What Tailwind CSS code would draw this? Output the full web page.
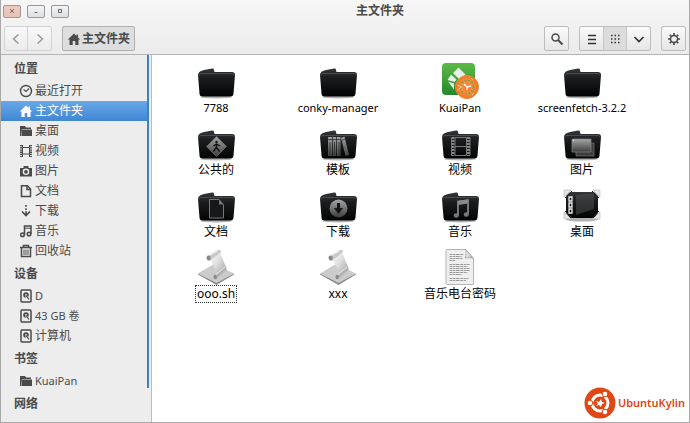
<!DOCTYPE html>
<html lang="zh-CN">
  <head>
    <meta charset="UTF-8" />
    <meta name="viewport" content="width=device-width, initial-scale=1.0" />
    <title>主文件夹</title>
    <script src="https://cdn.jsdelivr.net/npm/@tailwindcss/browser@4"></script>
  </head>
  <body class="bg-white font-['Noto_Sans','Noto_Sans_CJK_SC',sans-serif] text-xs text-[#4a4a4a]">
    <!-- Shared shapes -->
    <svg class="absolute size-0" aria-hidden="true">
      <defs>
        <linearGradient id="black" x1="0" y1="0" x2="0" y2="1">
          <stop offset="0" stop-color="#35383b" />
          <stop offset=".35" stop-color="#1a1c1e" />
          <stop offset="1" stop-color="#020303" />
        </linearGradient>
        <linearGradient id="silver" x1="0" y1="0" x2="0" y2="1">
          <stop offset="0" stop-color="#a5a5a5" />
          <stop offset="1" stop-color="#3e3e3e" />
        </linearGradient>
        <linearGradient id="paper" x1="0" y1="0" x2="1" y2="1">
          <stop offset="0" stop-color="#ffffff" />
          <stop offset=".5" stop-color="#dcdcdc" />
          <stop offset="1" stop-color="#a4a4a4" />
        </linearGradient>
        <linearGradient id="green" x1="0" y1="0" x2="0" y2="1">
          <stop offset="0" stop-color="#5cba45" />
          <stop offset="1" stop-color="#23892c" />
        </linearGradient>
        <radialGradient id="orange">
          <stop offset="0" stop-color="#ffb066" />
          <stop offset="1" stop-color="#f3741c" />
        </radialGradient>
        <symbol id="folder" viewBox="0 0 38 36">
          <ellipse cx="19" cy="34" rx="16" ry="1.5" fill="#000" opacity=".3" />
          <path d="M1 12c0-2 1-3 3-4l3-1 8-1.500c1.500-.2 2 .5 2 1.500l.5 2H35c2 0 3 1 3 3l-1.500 18.500c-.2 2-1 3-3 3h-28c-2 0-3-1-3-3z" fill="url(#black)" />
          <path d="M2 12.500c0-1.500 1-2 2-2h31c1 0 1.700.5 1.800 1.500" fill="none" stroke="#5a5d60" stroke-width=".7" />
        </symbol>
        <symbol id="script" viewBox="0 0 38 36">
          <path d="M1 24.500L17 15l20 9.500L19.500 35z" fill="#cbcbcb" />
          <path d="M1 24.500l18.500 9.500L37 24.500v1L19.500 36 1 25.500z" fill="#8b8b8b" />
          <path d="M13 10l10-7 6 15-8 7-4-1 2-3z" fill="url(#paper)" />
          <path d="M9.500 7.500L20 1c2-.7 4 .3 4 2L13.500 11.500c-2 1-4.500-1-4-4z" fill="#c9c9c9" />
          <path d="M10.500 7L20.500 1.500" stroke="#f2f2f2" stroke-width="1.500" />
          <ellipse cx="11.700" cy="9" rx="2" ry="2.400" fill="#888" />
          <path d="M17 27.500l11.500-10c1.500 1 1.500 3 .5 4L19 30c-2 .5-3-1-2-2.500z" fill="#b3b3b3" />
          <ellipse cx="18.200" cy="28" rx="1.700" ry="2.200" fill="#8a8a8a" />
          <path d="M19 25.500l9-7.500" stroke="#ededed" />
        </symbol>
        <symbol id="folder-small" viewBox="0 0 14 14">
          <path d="M1 2h5l1 1.500h5V5H3L2 12H1z" fill="currentColor" />
          <path d="M3 5.500h10V12H2.500z" fill="currentColor" />
        </symbol>
        <symbol id="home" viewBox="0 0 14 14">
          <path d="M7 1.500L.8 7.600h1.700V13h3.200V9h2.600v4h3.200V7.600h1.700L11 5.400V2.500H9.500V4z" fill="currentColor" />
        </symbol>
        <symbol id="disk" viewBox="0 0 14 14">
          <rect x="2" y="1" width="10" height="12" rx="1" fill="none" stroke="currentColor" stroke-width="1.500" />
          <circle cx="7" cy="6" r="2.800" fill="currentColor" />
          <circle cx="7" cy="6" r=".9" fill="#ededed" />
          <path d="M7 7l3 3.500" stroke="#ededed" stroke-width="2" />
          <path d="M7 6.500l3 4" stroke="currentColor" stroke-width="1.200" />
        </symbol>
      </defs>
    </svg>

    <div class="flex min-h-screen flex-col border-r border-b border-l border-[#a9a9a9]">
      <header class="border-b border-[#b4b4b4] bg-linear-to-b from-[#f7f7f7] to-[#ebebeb]">
        <!-- Title bar -->
        <div class="flex h-[22px] items-center gap-1 px-0.5">
          <div class="flex gap-1.5">
            <button aria-label="关闭" class="flex h-[13px] w-[18px] items-center justify-center rounded-xs border border-[#a09a96] bg-linear-to-b from-[#eec9be] to-[#e6c3b8] text-[#7c6c66]">
              <svg class="size-2" viewBox="0 0 8 8"><path d="M2 2l4 4M6 2L2 6" stroke="currentColor" /></svg>
            </button>
            <button aria-label="最小化" class="flex h-[13px] w-[18px] items-center justify-center rounded-xs border border-[#96999c] bg-linear-to-b from-[#f3f5f6] to-[#dce0e3] text-[#666]">
              <svg class="size-2" viewBox="0 0 8 8"><path d="M2.500 5.500h3" stroke="currentColor" /></svg>
            </button>
            <button aria-label="最大化" class="flex h-[13px] w-[18px] items-center justify-center rounded-xs border border-[#96999c] bg-linear-to-b from-[#f3f5f6] to-[#dce0e3] text-[#666]">
              <svg class="size-2" viewBox="0 0 8 8"><path d="M2.500 2.500h3v3h-3z" fill="none" stroke="currentColor" /></svg>
            </button>
          </div>
          <h1 class="flex-1 text-center leading-5 font-bold">主文件夹</h1>
        </div>

        <!-- Toolbar -->
        <div class="flex items-center gap-2.5 px-[3px] pt-1 pb-[3px]">
          <div class="flex h-[25px] rounded-xs border border-[#d3d3d3] bg-linear-to-b from-[#f9f9f9] to-[#ebebeb] text-[#999]">
            <button aria-label="后退" class="flex w-[23px] items-center justify-center border-r border-[#d3d3d3]">
              <svg class="size-3" viewBox="0 0 12 12"><path d="M8.500 1.500L3.500 6l5 4.500" fill="none" stroke="currentColor" stroke-width="1.500" /></svg>
            </button>
            <button aria-label="前进" class="flex w-[23px] items-center justify-center">
              <svg class="size-3" viewBox="0 0 12 12"><path d="M3.500 1.500l5 4.500-5 4.500" fill="none" stroke="currentColor" stroke-width="1.500" /></svg>
            </button>
          </div>
          <button class="flex h-[25px] items-center gap-px rounded-xs border border-[#b0b0b0] bg-[#dedede] px-1 font-bold">
            <svg class="size-3.5"><use href="#home" /></svg>主文件夹
          </button>
          <div class="flex-1"></div>
          <button aria-label="搜索" class="flex h-[25px] w-[25px] items-center justify-center rounded-xs border border-[#bdbdbd] bg-linear-to-b from-[#fafafa] to-[#e6e6e6]">
            <svg class="size-3.5" viewBox="0 0 14 14" fill="none" stroke="currentColor"><circle cx="5.500" cy="5.500" r="3.500" stroke-width="1.500" /><path d="M8 8l4.500 4.500" stroke-width="2" /></svg>
          </button>
          <div class="flex h-[25px] rounded-xs border border-[#bdbdbd] bg-linear-to-b from-[#fafafa] to-[#e6e6e6] text-[#333]">
            <button aria-label="列表视图" class="flex w-[23px] items-center justify-center">
              <svg class="size-3" viewBox="0 0 12 12"><path d="M2 2.500h8M2 6.500h8M2 10.500h8" stroke="currentColor" stroke-width="1.500" /></svg>
            </button>
            <button aria-label="图标视图" class="flex w-6 items-center justify-center border-x border-[#c6c6c6] bg-[#dcdcdc]">
              <svg class="size-3" viewBox="0 0 12 12"><path d="M2 2.500h9M2 6h9M2 9.500h9" stroke="currentColor" stroke-width="1.500" stroke-dasharray="1.500 2" /></svg>
            </button>
            <button aria-label="视图选项" class="flex w-[23px] items-center justify-center">
              <svg class="size-3" viewBox="0 0 12 12"><path d="M1.500 4L6 8.500 10.500 4" fill="none" stroke="currentColor" stroke-width="1.700" /></svg>
            </button>
          </div>
          <button aria-label="设置" class="flex h-[25px] w-[25px] items-center justify-center rounded-xs border border-[#bdbdbd] bg-linear-to-b from-[#fafafa] to-[#e6e6e6]">
            <svg class="size-3.5" viewBox="0 0 14 14" fill="none" stroke="currentColor"><circle cx="7" cy="7" r="3.500" stroke-width="1.500" /><path d="M7 1v2M7 11v2M1 7h2M11 7h2M2.800 2.800l1.400 1.400M9.800 9.800l1.400 1.400M11.200 2.800L9.800 4.200M4.200 9.800l-1.400 1.400" stroke-width="1.700" /></svg>
          </button>
        </div>
      </header>

      <div class="flex flex-1">
        <!-- Places -->
        <aside class="flex w-[151px] shrink-0 border-r border-[#bcbcbc] bg-[#ededed] pr-0.5">
          <nav class="flex-1 pt-px">
            <h2 class="flex h-[25px] items-center pl-[13px] font-bold">位置</h2>
            <a href="#" class="flex h-5 items-center gap-0.5 pl-[18px]">
              <svg class="size-3.5" viewBox="0 0 14 14" fill="none" stroke="currentColor"><circle cx="7" cy="7" r="5.500" stroke-width="1.400" /><path d="M4.500 5.500L7 7.500l3-3" stroke-width="1.100" /></svg>最近打开
            </a>
            <a href="#" class="flex h-5 items-center gap-0.5 bg-linear-to-b from-[#68a8e8] to-[#3f87d4] pl-[18px] text-white">
              <svg class="size-3.5"><use href="#home" /></svg>主文件夹
            </a>
            <a href="#" class="flex h-5 items-center gap-0.5 pl-[18px]">
              <svg class="size-3.5"><use href="#folder-small" /></svg>桌面
            </a>
            <a href="#" class="flex h-5 items-center gap-0.5 pl-[18px]">
              <svg class="size-3.5" viewBox="0 0 14 14" fill="none" stroke="currentColor"><path d="M2 1v12M12 1v12" stroke-width="2" stroke-dasharray="1.300 .9" /><path d="M3.500 1v12M10.500 1v12M3 3.500h8M3 10h8" /></svg>视频
            </a>
            <a href="#" class="flex h-5 items-center gap-0.5 pl-[18px]">
              <svg class="size-3.5" viewBox="0 0 14 14"><path d="M4.500 2h5v2H13v8.500H1V4h3.500z" fill="currentColor" /><circle cx="7" cy="7.800" r="2.600" fill="none" stroke="#ededed" stroke-width="1.400" /></svg>图片
            </a>
            <a href="#" class="flex h-5 items-center gap-0.5 pl-[18px]">
              <svg class="size-3.5" viewBox="0 0 14 14" fill="none" stroke="currentColor" stroke-width="1.500"><path d="M2.500 1.700h6L11.500 5v7.500h-9z" /><path d="M8 1.500v4h3.500" /></svg>文档
            </a>
            <a href="#" class="flex h-5 items-center gap-0.5 pl-[18px]">
              <svg class="size-3.5" viewBox="0 0 14 14" fill="none" stroke="currentColor" stroke-width="1.600"><path d="M7 1v1.700M7 4.200v1.700M7 7.300V11" /><path d="M3 7.500l4 4 4-4" /></svg>下载
            </a>
            <a href="#" class="flex h-5 items-center gap-0.5 pl-[18px]">
              <svg class="size-3.5" viewBox="0 0 14 14" fill="none" stroke="currentColor" stroke-width="1.500"><path d="M5.500 11V2h6.500v8" /><path d="M5.500 4.200H12" stroke-width="1" /><circle cx="3.500" cy="10.800" r="1.800" /><circle cx="10" cy="10" r="1.800" /></svg>音乐
            </a>
            <a href="#" class="flex h-5 items-center gap-0.5 pl-[18px]">
              <svg class="size-3.5" viewBox="0 0 14 14" fill="none" stroke="currentColor"><path d="M1 3.500h12M4.500 3V1.500h5V3" stroke-width="1.500" /><path d="M2.500 4v8.500h9V4" stroke-width="1.500" /><path d="M5 5.500V11M7 5.500V11M9 5.500V11" /></svg>回收站
            </a>

            <h2 class="flex h-[25px] items-center pl-[13px] font-bold">设备</h2>
            <a href="#" class="flex h-5 items-center gap-0.5 pl-[18px] text-[11px]">
              <svg class="size-3.5"><use href="#disk" /></svg>D
            </a>
            <a href="#" class="flex h-5 items-center gap-0.5 pl-[18px] text-[11px]">
              <svg class="size-3.5"><use href="#disk" /></svg>43 GB 卷
            </a>
            <a href="#" class="flex h-5 items-center gap-0.5 pl-[18px]">
              <svg class="size-3.5"><use href="#disk" /></svg>计算机
            </a>

            <h2 class="flex h-[25px] items-center pl-[13px] font-bold">书签</h2>
            <a href="#" class="flex h-5 items-center gap-0.5 pl-[18px] text-[11px]">
              <svg class="size-3.5"><use href="#folder-small" /></svg>KuaiPan
            </a>

            <h2 class="flex h-[25px] items-center pl-[13px] font-bold">网络</h2>
          </nav>
          <!-- Scroll position -->
          <div class="mb-[34px] w-0.5 bg-[#3d80cb]"></div>
        </aside>

        <!-- Files -->
        <main class="relative flex-1 bg-white pt-2 pl-[3px] text-black">
          <ul class="grid grid-cols-[repeat(auto-fill,122px)] gap-y-2">
            <li><button class="flex w-full flex-col items-center">
              <svg class="h-9 w-[38px]"><use href="#folder" /></svg>
              <span class="text-[11px] leading-[18px]">7788</span>
            </button></li>
            <li><button class="flex w-full flex-col items-center">
              <svg class="h-9 w-[38px]"><use href="#folder" /></svg>
              <span class="text-[11px] leading-[18px]">conky-manager</span>
            </button></li>
            <li><button class="flex w-full flex-col items-center">
              <svg class="h-9 w-[38px]" viewBox="0 0 38 36">
                <rect x="1" y="0" width="33" height="32" rx="4" fill="url(#green)" />
                <path d="M17.500 4.500l7 7-5.500 5.500-7-7zM10 11.500l5.500 5-2 2.500-7-2zM7 18.500l6 2v6z" fill="#e6efe4" />
                <circle cx="26" cy="24" r="11.500" fill="url(#orange)" stroke="#e58a4b" />
                <circle cx="26" cy="24" r="6.500" fill="none" stroke="#8d9b45" stroke-width="2" stroke-dasharray="2 1.400" />
                <circle cx="26" cy="24" r="4.500" fill="#ff7d32" />
                <path d="M23 21l3 3 4-1M26 24v3" fill="none" stroke="#fff" stroke-width="1.300" />
                <path d="M16.500 22l4 2-4 3M30 15l2 2M31 32l2-2" fill="none" stroke="#ffd09d" />
              </svg>
              <span class="text-[11px] leading-[18px]">KuaiPan</span>
            </button></li>
            <li><button class="flex w-full flex-col items-center">
              <svg class="h-9 w-[38px]"><use href="#folder" /></svg>
              <span class="text-[11px] leading-[18px]">screenfetch-3.2.2</span>
            </button></li>

            <li><button class="flex w-full flex-col items-center">
              <svg class="h-9 w-[38px]" viewBox="0 0 38 36">
                <use href="#folder" />
                <path d="M19.500 11.500l10 10-10 10-10-10z" fill="url(#silver)" stroke="#777" stroke-width=".6" />
                <circle cx="19.500" cy="17" r="1.200" fill="#111" />
                <path d="M19.500 18.500v4l3 4M19.500 22l-3 4.500M16.500 21l3-2 3.500 2" fill="none" stroke="#111" stroke-width="1.400" />
              </svg>
              <span class="leading-[18px]">公共的</span>
            </button></li>
            <li><button class="flex w-full flex-col items-center">
              <svg class="h-9 w-[38px]" viewBox="0 0 38 36">
                <use href="#folder" />
                <path d="M9 12h4v19H9zM13.700 12h3.600v19h-3.600zM18 12h3.500v19H18zM22 13l3.500-1.500L30 30l-3.500 1z" fill="url(#silver)" />
                <path d="M9 14.500h12.500M22.500 15.500l3.500-1.500M11 17v13M15.500 17v13M20 17v13" stroke="#222" stroke-width=".7" />
              </svg>
              <span class="leading-[18px]">模板</span>
            </button></li>
            <li><button class="flex w-full flex-col items-center">
              <svg class="h-9 w-[38px]" viewBox="0 0 38 36">
                <use href="#folder" />
                <path d="M12 12v19M27.500 12v19" stroke="#858585" stroke-width="3" stroke-dasharray="2 1" />
                <path d="M14 12.500h11.500v18H14zM14 21.500h11.500M10.500 12.500v18M29 12.500v18" fill="none" stroke="#777" />
              </svg>
              <span class="leading-[18px]">视频</span>
            </button></li>
            <li><button class="flex w-full flex-col items-center">
              <svg class="h-9 w-[38px]" viewBox="0 0 38 36">
                <use href="#folder" />
                <path d="M13 18h18v13H13z" fill="#3d3d3d" stroke="#777" stroke-width=".7" />
                <path d="M9 14h19v13H9z" fill="url(#silver)" stroke="#888" stroke-width=".7" />
                <path d="M10 15.500h1" stroke="#eee" />
              </svg>
              <span class="leading-[18px]">图片</span>
            </button></li>

            <li><button class="flex w-full flex-col items-center">
              <svg class="h-9 w-[38px]" viewBox="0 0 38 36">
                <use href="#folder" />
                <path d="M12.500 12.500H22l4.500 5V31h-14z" fill="#16181a" stroke="#777" />
                <path d="M22 12.500v5h4.500z" fill="#777" />
              </svg>
              <span class="leading-[18px]">文档</span>
            </button></li>
            <li><button class="flex w-full flex-col items-center">
              <svg class="h-9 w-[38px]" viewBox="0 0 38 36">
                <use href="#folder" />
                <circle cx="19.500" cy="21.500" r="9" fill="url(#silver)" />
                <path d="M18 16h3v5h3l-4.500 6-4.500-6h3z" fill="#151515" />
              </svg>
              <span class="leading-[18px]">下载</span>
            </button></li>
            <li><button class="flex w-full flex-col items-center">
              <svg class="h-9 w-[38px]" viewBox="0 0 38 36">
                <use href="#folder" />
                <path d="M17 28V14.500l10-1.500v14" fill="none" stroke="#999" stroke-width="1.500" />
                <path d="M17 14l10-1.500v4L17 18z" fill="#8a8a8a" />
                <ellipse cx="15.300" cy="28.500" rx="2.600" ry="2.200" fill="#777" />
                <ellipse cx="25.300" cy="27.500" rx="2.600" ry="2.200" fill="#777" />
              </svg>
              <span class="leading-[18px]">音乐</span>
            </button></li>
            <li><button class="flex w-full flex-col items-center">
              <svg class="h-9 w-[38px]" viewBox="0 0 38 36">
                <ellipse cx="19" cy="32.500" rx="16" ry="2" fill="#000" opacity=".3" />
                <path d="M7 5h24l4 4v17l-4 5H7l-4-5V9z" fill="url(#black)" />
                <path d="M23 7h8v15L13 28V8z" fill="#56585a" opacity=".45" />
                <path d="M6 10h3v4H6zM6 16h3v4H6zM6 22h3v4H6z" fill="none" stroke="#eee" stroke-width="1.300" />
                <path d="M1 3h7L1 10zM37 3h-7l7 7zM1 32h7l-7-7zM37 32h-7l7-7z" fill="#e4e4e4" stroke="#aaa" stroke-width=".5" />
                <path d="M2 11l7-7M29 4l7 7M2 24l7 7M29 31l7-7" stroke="#222" />
              </svg>
              <span class="leading-[18px]">桌面</span>
            </button></li>

            <li><button class="flex w-full flex-col items-center">
              <svg class="h-9 w-[38px]"><use href="#script" /></svg>
              <span class="px-0.5 leading-[18px] outline-1 -outline-offset-1 outline-dotted outline-[#333]">ooo.sh</span>
            </button></li>
            <li><button class="flex w-full flex-col items-center">
              <svg class="h-9 w-[38px]"><use href="#script" /></svg>
              <span class="leading-[18px]">xxx</span>
            </button></li>
            <li><button class="flex w-full flex-col items-center">
              <svg class="h-9 w-[38px]" viewBox="0 0 38 36">
                <path d="M6 .500h19l7.500 9V35.500H6c-.6 0-1-.4-1-1v-33c0-.6.4-1 1-1z" fill="#efefef" stroke="#b5b5b5" />
                <path d="M24.500.5c1 3 .5 6-.5 8.500 3-.5 6-.5 8.500.5z" fill="url(#paper)" stroke="#999" stroke-width=".6" />
                <path d="M8.500 5.500h14M8.500 7.500h12M8.500 9.500h13M8.500 11.500h6M8.500 15.500h20M8.500 17.500h18M8.500 19.500h20M8.500 21.500h20M8.500 23.500h18M8.500 25.500h12M8.500 29.500h19M8.500 31.500h17" stroke="#8f8f8f" stroke-width=".9" stroke-dasharray="3 .6 2 .5 4 .7" />
              </svg>
              <span class="leading-[18px]">音乐电台密码</span>
            </button></li>
          </ul>

          <!-- Distribution badge -->
          <div class="absolute right-1 bottom-[3px] flex items-center gap-0.5 text-[#dd4814]">
            <svg class="size-8" viewBox="0 0 32 32">
              <circle cx="16" cy="16" r="15.500" fill="currentColor" />
              <circle cx="16" cy="16" r="8" fill="none" stroke="#fff" stroke-width="3" />
              <path d="M16 16L5 16M16 16l5.500-9.500M16 16l5.500 9.500" stroke="#dd4814" stroke-width="1.500" />
              <circle cx="16" cy="16" r="6" fill="currentColor" />
              <g fill="#fff" stroke="#dd4814">
                <circle cx="6" cy="16" r="2.800" /><circle cx="21" cy="7" r="2.800" /><circle cx="21" cy="25" r="2.800" />
              </g>
              <path d="M12 14l3 1 2-3 1 3 3 1-3 1-1 3-2-2-3 1 2-2z" fill="#fff" />
            </svg>
            <span class="text-[11px] leading-4 font-semibold">UbuntuKylin</span>
          </div>
        </main>
      </div>
    </div>
  </body>
</html>
